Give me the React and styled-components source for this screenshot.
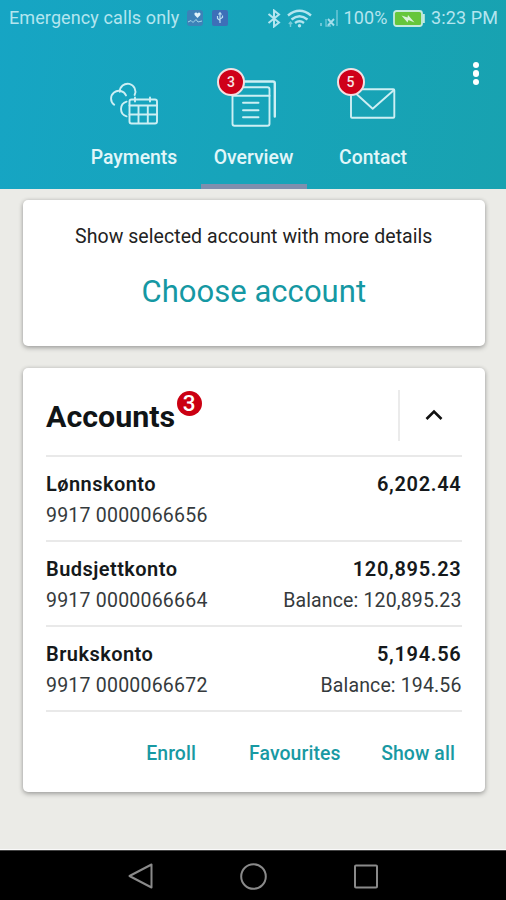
import styled, { createGlobalStyle } from "styled-components"

const GlobalStyle = createGlobalStyle`
    * {
        box-sizing : border-box;
    }
    body {
        margin : 0;
        font-family : Roboto, "Liberation Sans", sans-serif;
        background : #ebebe7;
    }
`
const Screen = styled.div`
    width : 506px;
    height : 900px;
    display : flex;
    flex-direction : column;
    background : #ebebe7;
    overflow : hidden;
`
const Header = styled.header`
    height : 188.5px;
    flex-shrink : 0;
    display : flex;
    flex-direction : column;
    background : linear-gradient(100deg, #16a5c4 0%, #17a4ba 50%, #18a2b0 100%);
    position : relative;
`
const StatusBar = styled.div`
    height : 36px;
    padding : 0 8px 0 9px;
    display : flex;
    align-items : center;
    color : #b4e5ef;
    font-size : 18px;
    line-height : 36px;
    white-space : nowrap;
`
const StatusText = styled.span`
    letter-spacing : ${props => props.$spacing || "0.1px"};
    margin-left : ${props => props.$left || "0"};
`
const StatusIcon = styled.svg`
    flex-shrink : 0;
    margin-left : ${props => props.$left || "0"};
`
const Spacer = styled.div`
    flex : 1;
`
const Tabs = styled.nav`
    flex : 1;
    display : flex;
    justify-content : center;
    gap : 13.5px;
    padding-left : 1px;
`
const Tab = styled.a`
    width : 106px;
    display : flex;
    flex-direction : column;
    align-items : center;
    padding-top : 36px;
    position : relative;
    border-bottom : 5px solid ${props => props.$active ? "#7f8fae" : "transparent"};
`
const TabIcon = styled.svg`
    width : 106px;
    height : 60px;
    fill : none;
    stroke : #cdeff4;
    stroke-width : 1.9;
    stroke-linecap : round;
    stroke-linejoin : round;
`
const TabLabel = styled.span`
    margin-top : 14px;
    font-size : 19.4px;
    line-height : 24px;
    font-weight : 500;
    color : #e2f6f9;
`
const TabBadge = styled.span`
    position : absolute;
    top : 31.5px;
    left : 16.5px;
    width : 28px;
    height : 28px;
    border : 2px solid #f3dfe2;
    border-radius : 50%;
    background : #cf0019;
    color : #f8e4e6;
    font-size : 14px;
    font-weight : 500;
    line-height : 24px;
    text-align : center;
`
const MoreButton = styled.button`
    position : absolute;
    top : 60px;
    right : 20px;
    width : 20px;
    height : 27px;
    padding : 0;
    border : none;
    background : none;
    display : flex;
    flex-direction : column;
    align-items : center;
    justify-content : center;
    gap : 2.2px;
`
const Dot = styled.span`
    width : 6.4px;
    height : 6.4px;
    border-radius : 50%;
    background : #fff;
`
const Content = styled.main`
    flex : 1;
    display : flex;
    flex-direction : column;
    gap : 22px;
    padding : 11.5px 21.5px 0 23px;
    border-bottom : 1px solid #fafafa;
`
const Card = styled.section`
    background : #fff;
    border-radius : 5px;
    box-shadow : 0 2px 5px rgba(0,0,0,0.28), 0 0 4px rgba(0,0,0,0.12);
`
const ChooseCard = styled(Card)`
    height : 145.5px;
    display : flex;
    flex-direction : column;
    align-items : center;
    padding-top : 25px;
`
const Hint = styled.p`
    margin : 0;
    font-size : 19.5px;
    line-height : 24px;
    letter-spacing : 0.06px;
    color : #222;
    white-space : nowrap;
`
const ChooseLink = styled.a`
    margin-top : 24px;
    font-size : 31px;
    line-height : 38px;
    letter-spacing : 0.04px;
    color : #1598a3;
    white-space : nowrap;
`
const AccountsCard = styled(Card)`
    height : 424px;
    padding : 0 23px;
`
const CardHead = styled.div`
    height : 89.5px;
    display : flex;
    align-items : center;
    border-bottom : 2px solid #e9e9e9;
    padding-top : 8px;
`
const Title = styled.h1`
    margin : 0;
    padding-top : 3px;
    font-size : 30.4px;
    line-height : 36px;
    font-weight : 700;
    color : #101416;
`
const CountBadge = styled.span`
    align-self : flex-start;
    margin : 15.5px 0 0 1.5px;
    width : 25px;
    height : 25px;
    border-radius : 50%;
    background : #cb0012;
    color : #fff;
    font-size : 22.5px;
    font-weight : 500;
    line-height : 25px;
    text-align : center;
`
const Toggle = styled.button`
    margin-left : auto;
    width : 63.5px;
    height : 51px;
    padding : 0 0 0 6px;
    border : none;
    border-left : 2px solid #ebebeb;
    background : none;
    display : flex;
    align-items : center;
    justify-content : center;
`
const Row = styled.div`
    height : 85px;
    padding-top : 12px;
    display : flex;
    justify-content : space-between;
    border-bottom : 2px solid #e9e9e9;
`
const Column = styled.div`
    display : flex;
    flex-direction : column;
    gap : 1.5px;
    text-align : ${props => props.$right ? "right" : "left"};
`
const Strong = styled.span`
    font-size : 20px;
    line-height : 30px;
    font-weight : 600;
    letter-spacing : ${props => props.$spacing || "0.45px"};
    color : #15191b;
`
const Detail = styled.span`
    font-size : 19.5px;
    line-height : 30px;
    letter-spacing : ${props => props.$spacing || "0.22px"};
    color : #353a3c;
`
const Actions = styled.div`
    display : flex;
    justify-content : flex-end;
    gap : 53px;
    padding : 29px 6.5px 0 0;
`
const Action = styled.a`
    font-size : 19.4px;
    line-height : 26px;
    font-weight : 500;
    letter-spacing : 0.1px;
    color : #1899a3;
    margin-right : ${props => props.$right || "0"};
`
const NavBar = styled.footer`
    height : 50px;
    flex-shrink : 0;
    display : flex;
    align-items : center;
    justify-content : center;
    gap : 85px;
    background : #000;
    border-top : 1px solid #444;
`
const NavIcon = styled.svg`
    width : 28px;
    height : 28px;
    fill : none;
    stroke : #8a8a8a;
    stroke-width : 2;
    stroke-linejoin : round;
`

const accounts = [
    { name: "Lønnskonto", number: "9917 0000066656", amount: "6,202.44" },
    { name: "Budsjettkonto", number: "9917 0000066664", amount: "120,895.23", balance: "120,895.23" },
    { name: "Brukskonto", number: "9917 0000066672", amount: "5,194.56", balance: "194.56" },
]

const Status = () => (
    <StatusBar>
        <StatusText>Emergency calls only</StatusText>
        {/* health */}
        <StatusIcon $left="8px" width="16" height="16" viewBox="0 0 16 16">
            <rect width="16" height="16" rx="3" fill="#3d82b8" />
            <path d="M10.5 8 L7.6 5 Q7 2.6 9 2.6 Q10.2 2.6 10.5 3.6 Q11 2.6 12.2 2.6 Q14 2.8 13.4 5 Z" fill="#dff3fa" />
            <path d="M1 12 L4 10.5 L6 12.5 L9 9.5 L11 12 L15 11" fill="none" stroke="#a5d6e8" strokeWidth="1" />
        </StatusIcon>
        {/* usb */}
        <StatusIcon $left="9px" width="16" height="16" viewBox="0 0 16 16">
            <rect width="16" height="16" rx="2" fill="#3d6fb8" />
            <path d="M8 3 V13 M8 10.5 L5.5 8.5 V6 M8 9 L10.5 7.5 V5.5 M6.5 4.5 L8 2.6 L9.5 4.5" fill="none" stroke="#b9dff0" strokeWidth="1.2" />
        </StatusIcon>
        <Spacer />
        {/* bluetooth */}
        <StatusIcon width="14" height="19" viewBox="0 0 14 19" fill="none" stroke="#b4e5ef" strokeWidth="2">
            <path d="M1.5 5 L12 13.5 L7 17.5 V1.5 L12 5.5 L1.5 14" />
        </StatusIcon>
        {/* wifi */}
        <StatusIcon $left="6px" width="25" height="19" viewBox="0 0 25 19" fill="none" stroke="#b4e5ef" strokeWidth="2.4">
            <path d="M1 6.5 Q12.5 -3 24 6.5" />
            <path d="M4.5 10.5 Q12.5 4 20.5 10.5" />
            <path d="M8 14 Q12.5 10.5 17 14" />
            <circle cx="12.5" cy="16.8" r="1.7" fill="#b4e5ef" stroke="none" />
            <path d="M3.5 13 V18 M1.8 15 L3.5 13 L5.2 15" strokeWidth="1.4" opacity="0.6" />
        </StatusIcon>
        {/* signal */}
        <StatusIcon $left="7px" width="20" height="19" viewBox="0 0 20 19" fill="none" stroke="#a3deeb">
            <path d="M2 14 V17" strokeWidth="2" opacity="0.6" />
            <path d="M7 10 V17 H12" strokeWidth="1.4" opacity="0.6" />
            <path d="M9 10 L15 16.5 M15 10 L9 16.5" strokeWidth="1.9" />
            <path d="M18 1 V17" strokeWidth="2" opacity="0.45" />
        </StatusIcon>
        <StatusText $left="5px">100%</StatusText>
        {/* battery */}
        <StatusIcon $left="5px" width="32" height="17" viewBox="0 0 32 17">
            <rect x="1" y="1" width="28" height="15" rx="2.5" fill="#66c63c" stroke="#c5ecdf" strokeWidth="1.8" />
            <path d="M30.8 4 V13" stroke="#c5ecdf" strokeWidth="2" />
            <path d="M8.5 5.5 L14.5 7.5 L15 5 L21.5 12.5 L15.5 10 L14.5 12.5 Z" fill="#daf3dc" />
        </StatusIcon>
        <StatusText $left="6.5px">3:23 PM</StatusText>
    </StatusBar>
)

const App = () => {
  return (
    <>
      <GlobalStyle />
      <Screen>
        <Header>
          <Status />
          <Tabs>
            <Tab>
                <TabIcon viewBox="81 72 106 60">
                    <path d="M119.8 91.8 A7.8 7.8 0 1 1 134.6 95" />
                    <path d="M114.2 104.8 A7.8 7.8 0 1 1 126 95.4" />
                    <path d="M126.6 101.6 A7.7 7.7 0 0 0 126.6 116.4" />
                    <rect x="129.5" y="99.5" width="27.5" height="24" rx="2" />
                    <path d="M129.5 105.5 H157 M129.5 114.5 H157 M138.5 105.5 V123 M147.8 105.5 V123" />
                    <path d="M135 97.5 V101.5 M150 97.5 V101.5" />
                </TabIcon>
                <TabLabel>Payments</TabLabel>
            </Tab>
            <Tab $active>
                <TabIcon viewBox="200.5 72 106 60">
                    <path d="M244 81.5 H272.5 Q274.3 81.5 274.3 83.3 V116.5" strokeWidth="2.4" />
                    <rect x="232" y="87.2" width="37" height="38.5" rx="2" />
                    <path d="M232 95.7 H269" />
                    <path d="M242.5 102.8 H258 M242.5 110.3 H258 M242.5 117.3 H258" />
                </TabIcon>
                <TabBadge>3</TabBadge>
                <TabLabel>Overview</TabLabel>
            </Tab>
            <Tab>
                <TabIcon viewBox="320 72 106 60">
                    <rect x="351" y="89.3" width="43.3" height="28.4" rx="1" />
                    <path d="M352 90 L372.7 108.8 L394 90" />
                </TabIcon>
                <TabBadge>5</TabBadge>
                <TabLabel>Contact</TabLabel>
            </Tab>
          </Tabs>
          <MoreButton>
            <Dot />
            <Dot />
            <Dot />
          </MoreButton>
        </Header>
        <Content>
          <ChooseCard>
            <Hint>Show selected account with more details</Hint>
            <ChooseLink>Choose account</ChooseLink>
          </ChooseCard>
          <AccountsCard>
            <CardHead>
                <Title>Accounts</Title>
                <CountBadge>3</CountBadge>
                <Toggle>
                    <svg width="18" height="12" viewBox="0 0 18 12" fill="none" stroke="#111" strokeWidth="2.6">
                        <path d="M1.5 10 L9 2.5 L16.5 10" />
                    </svg>
                </Toggle>
            </CardHead>
            {accounts.map(account => (
                <Row key={account.number}>
                    <Column>
                        <Strong>{account.name}</Strong>
                        <Detail>{account.number}</Detail>
                    </Column>
                    <Column $right>
                        <Strong $spacing="0.7px">{account.amount}</Strong>
                        {account.balance && <Detail $spacing="0.14px">Balance: {account.balance}</Detail>}
                    </Column>
                </Row>
            ))}
            <Actions>
                <Action>Enroll</Action>
                <Action $right="-12.5px">Favourites</Action>
                <Action>Show all</Action>
            </Actions>
          </AccountsCard>
        </Content>
        <NavBar>
            <NavIcon viewBox="0 0 28 28">
                <path d="M3.5 14 L25.5 2.5 V25.5 Z" />
            </NavIcon>
            <NavIcon viewBox="0 0 28 28">
                <circle cx="14.5" cy="14.5" r="12.3" />
            </NavIcon>
            <NavIcon viewBox="0 0 28 28">
                <rect x="3" y="3.5" width="22" height="22" rx="1" />
            </NavIcon>
        </NavBar>
      </Screen>
    </>
  )
}

export default App
